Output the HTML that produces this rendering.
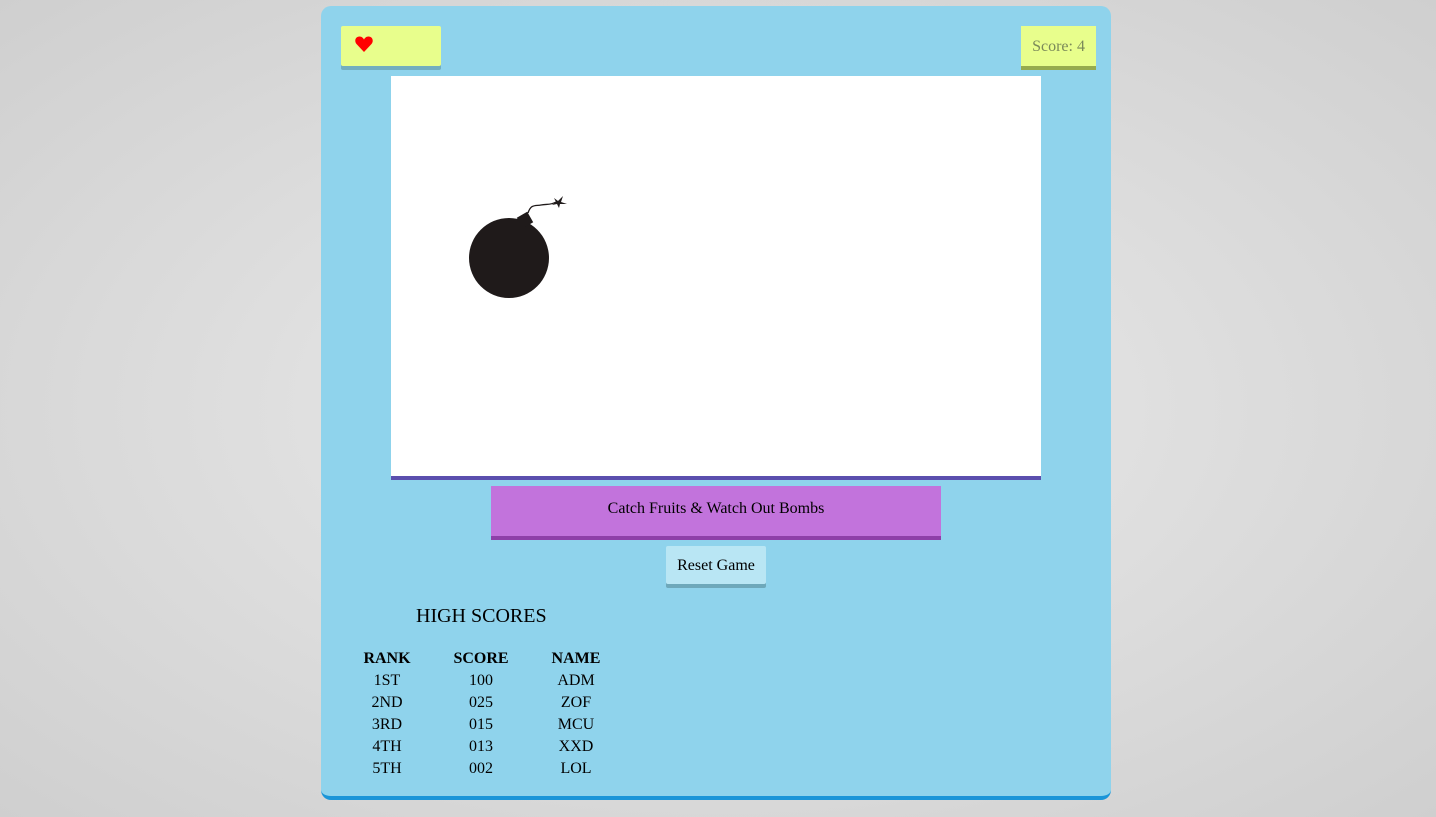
<!DOCTYPE html>
<html><head><style>
body{margin:0;width:1436px;height:817px;overflow:hidden;background:radial-gradient(ellipse at center,#ececec 0%,#e0e0e0 40%,#cfcfcf 100%);font-family:"Liberation Serif",serif;}
.panel{position:absolute;left:321px;top:6px;width:790px;height:790px;background:#8fd3ec;border-radius:10px;border-bottom:4px solid #1a95d8;box-sizing:content-box}
.abs{position:absolute}
.heart{left:20px;top:20px;width:100px;height:40px;background:#e8fe8c;border-radius:2px;box-shadow:0 4px 0 #73aebf}
.score{left:700px;top:20px;width:75px;height:40px;background:#e8fe8c;border-bottom:4px solid #96ab4e;color:#7b8a5a;font-size:16px;line-height:42px;text-align:center}
.canvas{left:70px;top:70px;width:650px;height:400px;background:#fff;border-bottom:4px solid #5b4fae}
.banner{left:170px;top:480px;width:450px;height:50px;background:#c273dc;border-bottom:4px solid #8e3fa8;text-align:center;line-height:45px;font-size:16px}
.reset{left:345px;top:540px;width:100px;height:38px;background:#b9e6f4;border-radius:2px;box-shadow:0 4px 0 #6ea8ba;text-align:center;line-height:40px;font-size:16px}
.hs{left:95px;top:599px;font-size:20px}
table{position:absolute;left:30px;top:642px;border-collapse:collapse;font-size:16px}
td,th{text-align:center;padding:0;height:22px}
</style></head><body>
<div class="panel">
<div class="abs heart"><svg width="18" height="16" viewBox="0 0 18 16" style="position:absolute;left:14px;top:10px"><path d="M9 16 L1.5 8 C-1 5 0.5 0.5 4.5 0.5 C6.8 0.5 8.2 2 9 3.5 C9.8 2 11.2 0.5 13.5 0.5 C17.5 0.5 19 5 16.5 8 Z" fill="#f00"/></svg></div>
<div class="abs score">Score: 4</div>
<div class="abs canvas"><svg width="120" height="120" style="position:absolute;left:70px;top:110px" viewBox="0 0 120 120">
<circle cx="48" cy="72" r="40" fill="#1f1a1a"/>
<rect x="58" y="28" width="12" height="12" fill="#1f1a1a" transform="rotate(-30 64 34)"/>
<path d="M67 27 C70 18 74 20 80 19 C86 18 90 19 95 16" stroke="#1f1a1a" stroke-width="1.3" fill="none"/>
<path d="M93 12 L97 15 L102 10 L100 16 L106 18 L99 18 L98 22 L96 18 L91 19 L95 16 Z" fill="#1f1a1a"/>
</svg></div>
<div class="abs banner">Catch Fruits &amp; Watch Out Bombs</div>
<div class="abs reset">Reset Game</div>
<div class="abs hs">HIGH SCORES</div>
<table>
<tr><th style="width:72px">RANK</th><th style="width:116px">SCORE</th><th style="width:74px">NAME</th></tr>
<tr><td>1ST</td><td>100</td><td>ADM</td></tr>
<tr><td>2ND</td><td>025</td><td>ZOF</td></tr>
<tr><td>3RD</td><td>015</td><td>MCU</td></tr>
<tr><td>4TH</td><td>013</td><td>XXD</td></tr>
<tr><td>5TH</td><td>002</td><td>LOL</td></tr>
</table>
</div>
</body></html>
